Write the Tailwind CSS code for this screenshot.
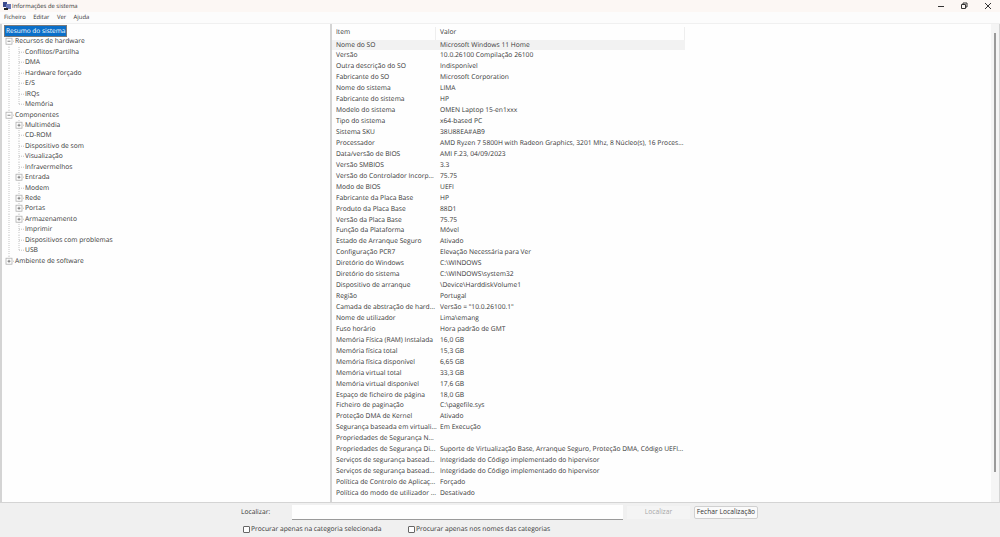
<!DOCTYPE html>
<html lang="pt">
<head>
  <meta charset="UTF-8" />
  <title>Informações de sistema</title>
  <script src="https://cdn.jsdelivr.net/npm/@tailwindcss/browser@4"></script>
</head>
<body class="w-[1000px] h-[537px] overflow-hidden bg-[#f0f0f0] text-[#333333] text-[6.7px] leading-[10.45px] [text-rendering:geometricPrecision] font-['Open_Sans','Noto_Sans',sans-serif]">
<div class="opacity-[0.995] bg-[#f0f0f0] h-full">

  <!-- Title bar -->
  <div class="h-[12px] bg-[#fdf8f5] flex items-center pl-[3px] text-[5.9px]">
    <svg width="8" height="8" viewBox="0 0 8 8" class="mr-[1px]">
      <rect x="0" y="0" width="4" height="5" fill="#3b4a8c" />
      <rect x="3" y="2" width="5" height="5" fill="#6a78b8" />
      <rect x="1" y="6" width="4" height="2" fill="#222" />
    </svg>
    <span>Informações de sistema</span>
    <div class="ml-auto flex items-center">
      <svg width="8" height="10" viewBox="0 0 8 10" class="mr-[15px]"><path d="M1 5.5h6" stroke="#333" fill="none" /></svg>
      <svg width="8" height="10" viewBox="0 0 8 10" class="mr-[16px]"><path d="M1.5 3.5h4v4h-4zM3 3.5V2h4v4H5.5" stroke="#333" fill="none" /></svg>
      <svg width="8" height="10" viewBox="0 0 8 10" class="mr-[8px]"><path d="M1 2l6 6M7 2l-6 6" stroke="#333" fill="none" /></svg>
    </div>
  </div>

  <!-- Menu -->
  <div class="h-[11px] bg-[#fdfdfd] flex items-center gap-[7.5px] pl-[4px] text-[5.9px]">
    <span>Ficheiro</span><span>Editar</span><span>Ver</span><span>Ajuda</span>
  </div>

  <!-- Panes -->
  <div class="h-[479px] mt-[1px] flex gap-[2px] pl-[2px] pr-[1px] bg-[#d4d4d4] pb-[1px]">
    <div id="tree" class="w-[328px] bg-white pt-[2px] overflow-hidden"></div>
    <div class="flex-1 bg-white flex overflow-hidden">
      <div class="w-[353px] pt-[3px] shrink-0">
        <div class="flex h-[12.5px] border-r border-[#eeeeee]">
          <div class="w-[104px] pl-[4px] border-r border-[#eeeeee]">Item</div>
          <div class="pl-[4px]">Valor</div>
        </div>
        <div id="rows"></div>
      </div>
      <div class="flex-1"></div>
      <div class="w-[8px] bg-[#f6f6f6] flex justify-center pt-[9px]">
        <div class="w-[1.5px] h-[439px] bg-[#9a9a9a]"></div>
      </div>
    </div>
  </div>

  <!-- Search -->
  <div class="pl-[241px] pt-[1px]">
    <div class="flex items-center h-[16px]">
      <label class="w-[51px]">Localizar:</label>
      <div class="w-[331px] h-[15px] bg-white border-b border-[#9a9a9a]"></div>
      <button class="w-[63px] h-[13px] ml-[4px] bg-[#f5f5f5] text-[#a6a6a6]">Localizar</button>
      <button class="w-[64px] h-[13px] ml-[4px] bg-[#fbfbfb] border border-[#d0d0d0] rounded-[2px] whitespace-nowrap">Fechar Localização</button>
    </div>
    <div class="flex items-center mt-[4px] ml-[2px] h-[11px]">
      <span class="w-[7px] h-[7px] border border-[#666666] rounded-[1px] bg-white mr-[1px]"></span>
      <span class="w-[157px] whitespace-nowrap">Procurar apenas na categoria selecionada</span>
      <span class="w-[7px] h-[7px] border border-[#666666] rounded-[1px] bg-white mr-[1px]"></span>
      <span class="whitespace-nowrap">Procurar apenas nos nomes das categorias</span>
    </div>
  </div>
</div>

  <script>
    // [label, depth, expander, last child of its group]
    const tree = [
      ["Recursos de hardware", 0, "-"],
      ["Conflitos/Partilha", 1], ["DMA", 1], ["Hardware forçado", 1], ["E/S", 1], ["IRQs", 1], ["Memória", 1, null, true],
      ["Componentes", 0, "-"],
      ["Multimédia", 1, "+"], ["CD-ROM", 1], ["Dispositivo de som", 1], ["Visualização", 1], ["Infravermelhos", 1],
      ["Entrada", 1, "+"], ["Modem", 1], ["Rede", 1, "+"], ["Portas", 1, "+"], ["Armazenamento", 1, "+"],
      ["Imprimir", 1], ["Dispositivos com problemas", 1], ["USB", 1, null, true],
      ["Ambiente de software", 0, "+"],
    ];

    const H = 10.45;
    function expander(x, kind) {
      const y = H / 2;
      let s = `<rect x="${x - 3}" y="${y - 3}" width="6" height="6" fill="#fff" stroke="#b0b0b0" stroke-width="0.8"/>`;
      s += `<path d="M${x - 1.5} ${y}h3" stroke="#666" stroke-width="0.8"/>`;
      if (kind === "+") s += `<path d="M${x} ${y - 1.5}v3" stroke="#666" stroke-width="0.8"/>`;
      return s;
    }
    function treeRow([label, depth, exp, last], isLastTop) {
      const dash = 'stroke="#b4b4b4" stroke-width="0.8" stroke-dasharray="1 1" fill="none"';
      const mid = H / 2;
      let svg = `<path d="M7 0V${isLastTop ? mid : H}" ${dash}/>`;
      if (depth === 1) {
        svg += `<path d="M17 0V${last ? mid : H}M17 ${mid}H23" ${dash}/>`;
        if (exp) svg += expander(17, exp);
      } else {
        svg += `<path d="M7 ${mid}H13" ${dash}/>`;
        if (exp) svg += expander(7, exp);
      }
      const w = depth === 1 ? 23 : 13;
      return `<div class="flex h-[10.45px] whitespace-nowrap"><svg width="${w}" height="${H}" class="shrink-0">${svg}</svg><span>${label}</span></div>`;
    }
    document.getElementById("tree").innerHTML =
      `<div class="h-[10.45px] ml-[3px] w-[61px] pl-[1px] whitespace-nowrap text-[6.5px] bg-[#0a6fc9] text-white outline outline-[#222222]/60">Resumo do sistema</div>` +
      tree.map((r, i) => treeRow(r, i === tree.length - 1)).join("");

    const rows = [
      ["Nome do SO", "Microsoft Windows 11 Home"],
      ["Versão", "10.0.26100 Compilação 26100"],
      ["Outra descrição do SO", "Indisponível"],
      ["Fabricante do SO", "Microsoft Corporation"],
      ["Nome do sistema", "LIMA"],
      ["Fabricante do sistema", "HP"],
      ["Modelo do sistema", "OMEN Laptop 15-en1xxx"],
      ["Tipo do sistema", "x64-based PC"],
      ["Sistema SKU", "38U88EA#AB9"],
      ["Processador", "AMD Ryzen 7 5800H with Radeon Graphics, 3201 Mhz, 8 Núcleo(s), 16 Proces..."],
      ["Data/versão de BIOS", "AMI F.23, 04/09/2023"],
      ["Versão SMBIOS", "3.3"],
      ["Versão do Controlador Incorp...", "75.75"],
      ["Modo de BIOS", "UEFI"],
      ["Fabricante da Placa Base", "HP"],
      ["Produto da Placa Base", "88D1"],
      ["Versão da Placa Base", "75.75"],
      ["Função da Plataforma", "Móvel"],
      ["Estado de Arranque Seguro", "Ativado"],
      ["Configuração PCR7", "Elevação Necessária para Ver"],
      ["Diretório do Windows", "C:\\WINDOWS"],
      ["Diretório do sistema", "C:\\WINDOWS\\system32"],
      ["Dispositivo de arranque", "\\Device\\HarddiskVolume1"],
      ["Região", "Portugal"],
      ["Camada de abstração de hard...", 'Versão = "10.0.26100.1"'],
      ["Nome de utilizador", "Lima\\emang"],
      ["Fuso horário", "Hora padrão de GMT"],
      ["Memória Física (RAM) Instalada", "16,0 GB"],
      ["Memória física total", "15,3 GB"],
      ["Memória física disponível", "6,65 GB"],
      ["Memória virtual total", "33,3 GB"],
      ["Memória virtual disponível", "17,6 GB"],
      ["Espaço de ficheiro de página", "18,0 GB"],
      ["Ficheiro de paginação", "C:\\pagefile.sys"],
      ["Proteção DMA de Kernel", "Ativado"],
      ["Segurança baseada em virtuali...", "Em Execução"],
      ["Propriedades de Segurança N...", ""],
      ["Propriedades de Segurança Di...", "Suporte de Virtualização Base, Arranque Seguro, Proteção DMA, Código UEFI..."],
      ["Serviços de segurança basead...", "Integridade do Código implementado do hipervisor"],
      ["Serviços de segurança basead...", "Integridade do Código implementado do hipervisor"],
      ["Política de Controlo de Aplicaç...", "Forçado"],
      ["Política do modo de utilizador ...", "Desativado"],
    ];
    document.getElementById("rows").innerHTML = rows.map(([k, v], i) =>
      `<div class="flex h-[10.94px] leading-[10.94px] whitespace-nowrap ${i === 0 ? "bg-[#f3f3f3]" : ""}"><div class="w-[104px] pl-[4px] shrink-0">${k}</div><div class="pl-[4px]">${v}</div></div>`
    ).join("");
  </script>
</body>
</html>
